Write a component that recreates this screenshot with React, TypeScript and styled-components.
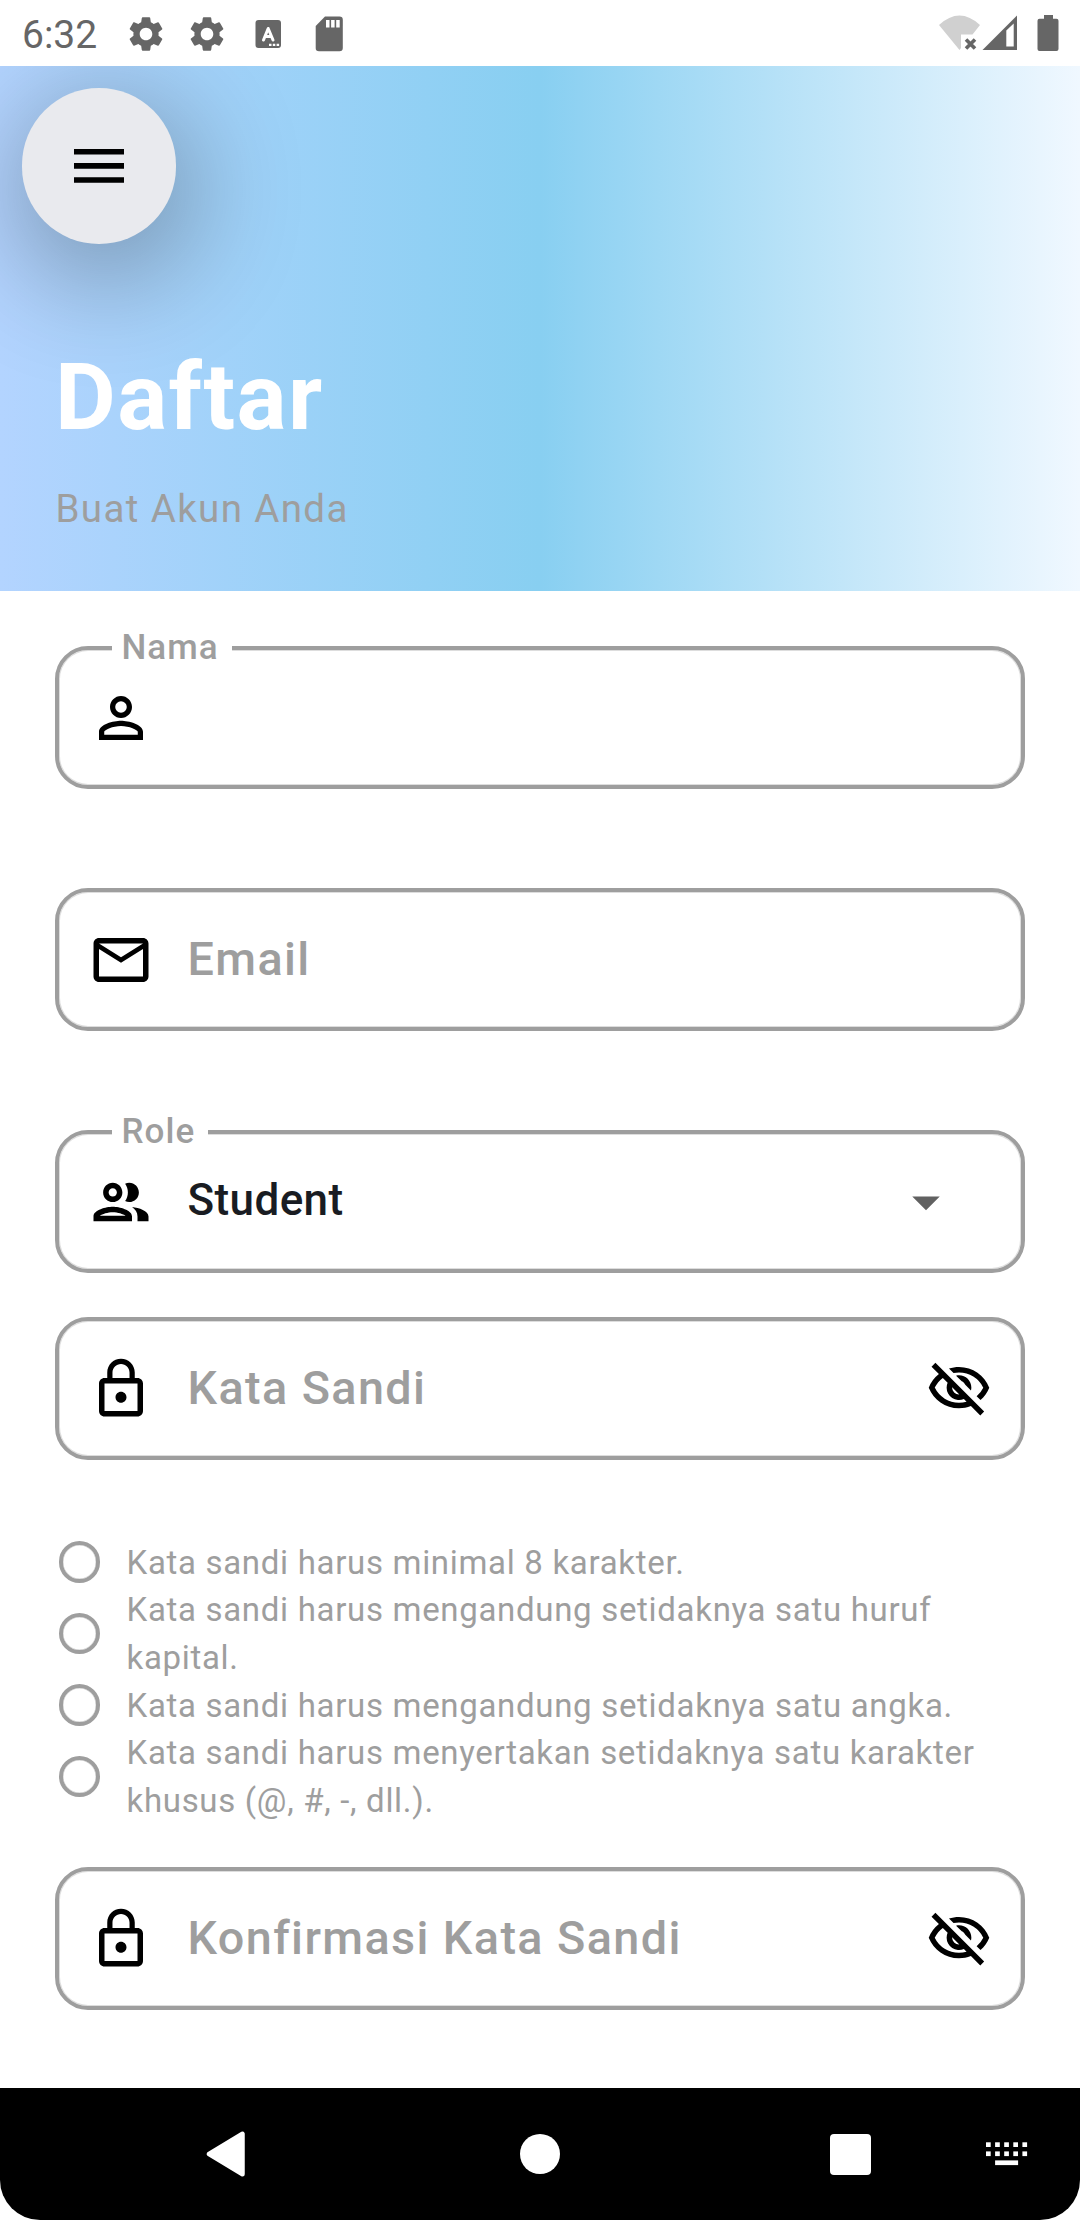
import React from "react";
import styled, { createGlobalStyle } from "styled-components";
import {
  MdArrowDropDown,
  MdLockOutline,
  MdMailOutline,
  MdOutlineVisibilityOff,
  MdPersonOutline,
  MdSettings,
} from "react-icons/md";

const GREY = "#9e9e9e";
const STATUS = "#666666";

const GlobalStyle = createGlobalStyle`
  * { box-sizing: border-box; }
  html, body { margin: 0; padding: 0; background: #ffffff; }
  body { font-family: Roboto, "Noto Sans", sans-serif; -webkit-font-smoothing: antialiased; }
`;

const Screen = styled.div`
  display: flex;
  flex-direction: column;
  width: 1080px;
  height: 2220px;
  overflow: hidden;
  background: #ffffff;
`;

const StatusBar = styled.div`
  display: flex;
  align-items: center;
  flex: none;
  height: 66px;
  padding: 0 21px 0 22px;
  color: ${STATUS};
`;

const Clock = styled.span`
  width: 103px;
  font-size: 39px;
  line-height: 46px;
  padding-top: 3px;
`;

const StatusIcons = styled.div`
  display: flex;
  align-items: center;
  gap: 19px;
  flex: 1;
  padding-top: 1px;
`;

const SystemIcons = styled.div`
  display: flex;
  align-items: center;
`;

const Header = styled.header`
  flex: none;
  height: 524.5px;
  padding: 22px 22px 0;
  overflow: hidden;
  background: linear-gradient(90deg, #b3d4ff 0%, #88cff1 50%, #f0f8ff 100%);
`;

const MenuButton = styled.button`
  display: flex;
  align-items: center;
  justify-content: center;
  width: 154px;
  height: 156px;
  padding: 0;
  border: 0;
  border-radius: 77px;
  background: #e9eaee;
  box-shadow: 6px 24px 110px 14px rgba(0, 0, 0, 0.29);
`;

const Title = styled.h1`
  margin: 98px 0 0 33px;
  font-size: 93.5px;
  line-height: 110px;
  font-weight: 700;
  letter-spacing: 1.4px;
  color: #ffffff;
`;

const Subtitle = styled.p`
  margin: 34px 0 0 33.5px;
  font-size: 38.5px;
  line-height: 46px;
  letter-spacing: 1.375px;
  color: ${GREY};
`;

const Form = styled.form`
  flex: 1;
  display: flex;
  flex-direction: column;
  padding: 55.5px 55px 0;
`;

const Field = styled.div<{ $gap?: number }>`
  position: relative;
  display: flex;
  align-items: center;
  flex: none;
  height: 142.7px;
  margin-bottom: ${(p) => p.$gap ?? 0}px;
  padding: 0 29px;
  border: 4px solid ${GREY};
  border-radius: 33px;
  box-shadow: inset 0 0 0 1px rgba(158, 158, 158, 0.35);
`;

const FloatingLabel = styled.label<{ $width: number }>`
  position: absolute;
  top: -23px;
  left: 53px;
  width: ${(p) => p.$width}px;
  padding-left: 9.5px;
  background: #ffffff;
  color: ${GREY};
  font-size: 35px;
  line-height: 41px;
  font-weight: 500;
  letter-spacing: 1.03px;
`;

const Leading = styled.span`
  display: flex;
  width: 66px;
  height: 66px;
  margin: 2px 33.5px 0 0;
  color: #000;
`;

const Placeholder = styled.span`
  flex: 1;
  color: ${GREY};
  font-size: 46.75px;
  line-height: 56px;
  font-weight: 500;
  letter-spacing: 1.4px;
`;

const Value = styled.span`
  flex: 1;
  color: #191c22;
  font-size: 44px;
  line-height: 56px;
  padding-bottom: 3px;
  font-weight: 500;
  letter-spacing: 0.4px;
`;

const Trailing = styled.span<{ $inset?: number; $color?: string }>`
  display: flex;
  width: 66px;
  height: 66px;
  margin: 2px ${(p) => p.$inset ?? 0}px 0 0;
  color: ${(p) => p.$color ?? "#000"};
`;

const Rules = styled.ul`
  list-style: none;
  margin: 0 0 43px;
  padding: 0;
`;

const Rule = styled.li<{ $lines: number }>`
  display: flex;
  align-items: center;
  gap: 22px;
  height: ${(p) => (p.$lines === 2 ? 95 : 48)}px;
`;

const Radio = styled.span`
  flex: none;
  width: 41.3px;
  height: 41.3px;
  margin: 0 4.1px;
  border: 4px solid ${GREY};
  border-radius: 50%;
  box-shadow: inset 0 0 0 0.5px rgba(158, 158, 158, 0.5);
`;

const RuleText = styled.span`
  color: ${GREY};
  font-size: 33px;
  line-height: 47.2px;
  letter-spacing: 0.6875px;
  white-space: pre-line;
`;

const NavShell = styled.div`
  flex: none;
  background: #ffffff;
`;

const NavBar = styled.nav`
  display: flex;
  align-items: center;
  height: 132px;
  padding-left: 206px;
  background: #000;
  border-radius: 0 0 40px 40px;
`;

const Home = styled.span`
  width: 40px;
  height: 40px;
  margin-left: 274px;
  border-radius: 50%;
  background: #fff;
`;

const Recents = styled.span`
  width: 41.3px;
  height: 41.3px;
  margin: 1px 114.7px 0 270px;
  border-radius: 4px;
  background: #fff;
`;

const PeopleIcon = () => (
  <svg width="66" height="66" viewBox="0 0 24 24" fill="currentColor">
    <path d="M9 13.75c-2.34 0-7 1.17-7 3.5V19h14v-1.75c0-2.33-4.66-3.5-7-3.5zM4.34 17c.84-.58 2.87-1.25 4.66-1.25s3.82.67 4.66 1.25H4.34zM9 12c1.93 0 3.5-1.57 3.5-3.5S10.93 5 9 5 5.5 6.57 5.5 8.5 7.07 12 9 12zm0-5c.83 0 1.5.67 1.5 1.5S9.83 10 9 10s-1.5-.67-1.5-1.5S8.17 7 9 7zm7.04 6.81c1.16.84 1.96 1.96 1.96 3.44V19h4v-1.75c0-2.02-3.5-3.17-5.96-3.44zM15 12c1.93 0 3.5-1.57 3.5-3.5S16.93 5 15 5c-.54 0-1.04.13-1.5.35.63.89 1 1.98 1 3.15s-.37 2.26-1 3.15c.46.22.96.35 1.5.35z" />
  </svg>
);

const LanguageIcon = () => (
  <svg width="42" height="42" viewBox="0 0 42 42">
    <rect x="8.5" y="7" width="25.5" height="28" rx="3" fill={STATUS} />
    <path
      d="M16.5 27L21.2 15.5L26 27M18 23.5H24.5"
      fill="none"
      stroke="#ffffff"
      strokeWidth="3"
      strokeLinecap="round"
      strokeLinejoin="round"
    />
    <path d="M22 30.800h2.500v2.200h-2.500zM25.800 30.800h2.500v2.200h-2.500zM29.600 30.800h2.500v2.200h-2.500z" fill="#ffffff" />
  </svg>
);

const SdCardIcon = () => (
  <svg width="42" height="42" viewBox="0 0 42 42">
    <path d="M17 3.500H31.500a3.300 3.300 0 0 1 3.300 3.300V35a3.300 3.300 0 0 1-3.300 3.300H11a3.300 3.300 0 0 1-3.300-3.300V13z" fill={STATUS} />
    <path d="M18 7h3.500v7.500h-3.500zM23.100 7h3.500v7.500h-3.500zM28.200 7h3.500v7.500h-3.500z" fill="#ffffff" />
  </svg>
);

const WifiIcon = () => (
  <svg width="44" height="42" viewBox="0 0 44 42">
    <path d="M1 13Q21.500-6 42 13L34.500 22.500H23V36L21.500 38z" fill="#d0d0d0" />
    <path d="M28 27.500l9 9M37 27.500l-9 9" stroke={STATUS} strokeWidth="3.6" />
  </svg>
);

const SignalIcon = () => (
  <svg width="36" height="42" viewBox="0 0 36 42">
    <path fillRule="evenodd" d="M.5 38L35 3.500V38zM24.300 18.500V34.500H31.700V11.500z" fill={STATUS} />
  </svg>
);

const BatteryIcon = () => (
  <svg width="22" height="42" viewBox="0 0 22 42">
    <path d="M7 3h9v3.800h3.500a2 2 0 0 1 2 2V37a2 2 0 0 1-2 2H2.500a2 2 0 0 1-2-2V8.800a2 2 0 0 1 2-2H7z" fill={STATUS} />
  </svg>
);

const SystemGap = styled.span<{ $w: number }>`
  width: ${(p) => p.$w}px;
`;

const MenuIcon = () => (
  <svg width="50" height="34" viewBox="0 0 50 34">
    <path d="M0 0h50v5.600H0zM0 14.100h50v5.600H0zM0 28.200h50v5.600H0z" fill="#000" />
  </svg>
);

const BackIcon = () => (
  <svg width="40" height="46" viewBox="0 0 40 46">
    <path d="M3 23L36.500 2.800V43.200z" fill="#fff" stroke="#fff" strokeWidth="4.5" strokeLinejoin="round" />
  </svg>
);

const KeyboardIcon = () => (
  <svg width="42" height="24" viewBox="0 0 42 24">
    {[0, 1, 2, 3, 4].map((i) => (
      <g key={i} fill="#fff">
        <rect x={i * 9.1} y="0.3" width="4.7" height="4.7" />
        <rect x={i * 9.1} y="9.4" width="4.7" height="4.7" />
      </g>
    ))}
    <rect x="9.1" y="18.4" width="23" height="4.7" fill="#fff" />
  </svg>
);

const rules = [
  { lines: 1, text: "Kata sandi harus minimal 8 karakter." },
  { lines: 2, text: "Kata sandi harus mengandung setidaknya satu huruf\nkapital." },
  { lines: 1, text: "Kata sandi harus mengandung setidaknya satu angka." },
  { lines: 2, text: "Kata sandi harus menyertakan setidaknya satu karakter\nkhusus (@, #, -, dll.)." },
];

export default function App() {
  return (
    <Screen>
      <GlobalStyle />
      <StatusBar>
        <Clock>6:32</Clock>
        <StatusIcons>
          <MdSettings size={42} />
          <MdSettings size={42} />
          <LanguageIcon />
          <SdCardIcon />
        </StatusIcons>
        <SystemIcons>
          <WifiIcon />
          <SignalIcon />
          <SystemGap $w={19} />
          <BatteryIcon />
        </SystemIcons>
      </StatusBar>
      <Header>
        <MenuButton type="button" aria-label="Menu">
          <MenuIcon />
        </MenuButton>
        <Title>Daftar</Title>
        <Subtitle>Buat Akun Anda</Subtitle>
      </Header>
      <Form>
        <Field $gap={99.3}>
          <FloatingLabel $width={120}>Nama</FloatingLabel>
          <Leading><MdPersonOutline size={66} /></Leading>
        </Field>
        <Field $gap={99.3}>
          <Leading><MdMailOutline size={66} /></Leading>
          <Placeholder>Email</Placeholder>
        </Field>
        <Field $gap={44.3}>
          <FloatingLabel $width={96}>Role</FloatingLabel>
          <Leading><PeopleIcon /></Leading>
          <Value>Student</Value>
          <Trailing $inset={33} $color="#616161"><MdArrowDropDown size={66} /></Trailing>
        </Field>
        <Field $gap={78.5}>
          <Leading><MdLockOutline size={66} /></Leading>
          <Placeholder>Kata Sandi</Placeholder>
          <Trailing><MdOutlineVisibilityOff size={66} /></Trailing>
        </Field>
        <Rules>
          {rules.map((rule) => (
            <Rule key={rule.text} $lines={rule.lines}>
              <Radio />
              <RuleText>{rule.text}</RuleText>
            </Rule>
          ))}
        </Rules>
        <Field>
          <Leading><MdLockOutline size={66} /></Leading>
          <Placeholder>Konfirmasi Kata Sandi</Placeholder>
          <Trailing><MdOutlineVisibilityOff size={66} /></Trailing>
        </Field>
      </Form>
      <NavShell>
        <NavBar>
          <BackIcon />
          <Home />
          <Recents />
          <KeyboardIcon />
        </NavBar>
      </NavShell>
    </Screen>
  );
}
